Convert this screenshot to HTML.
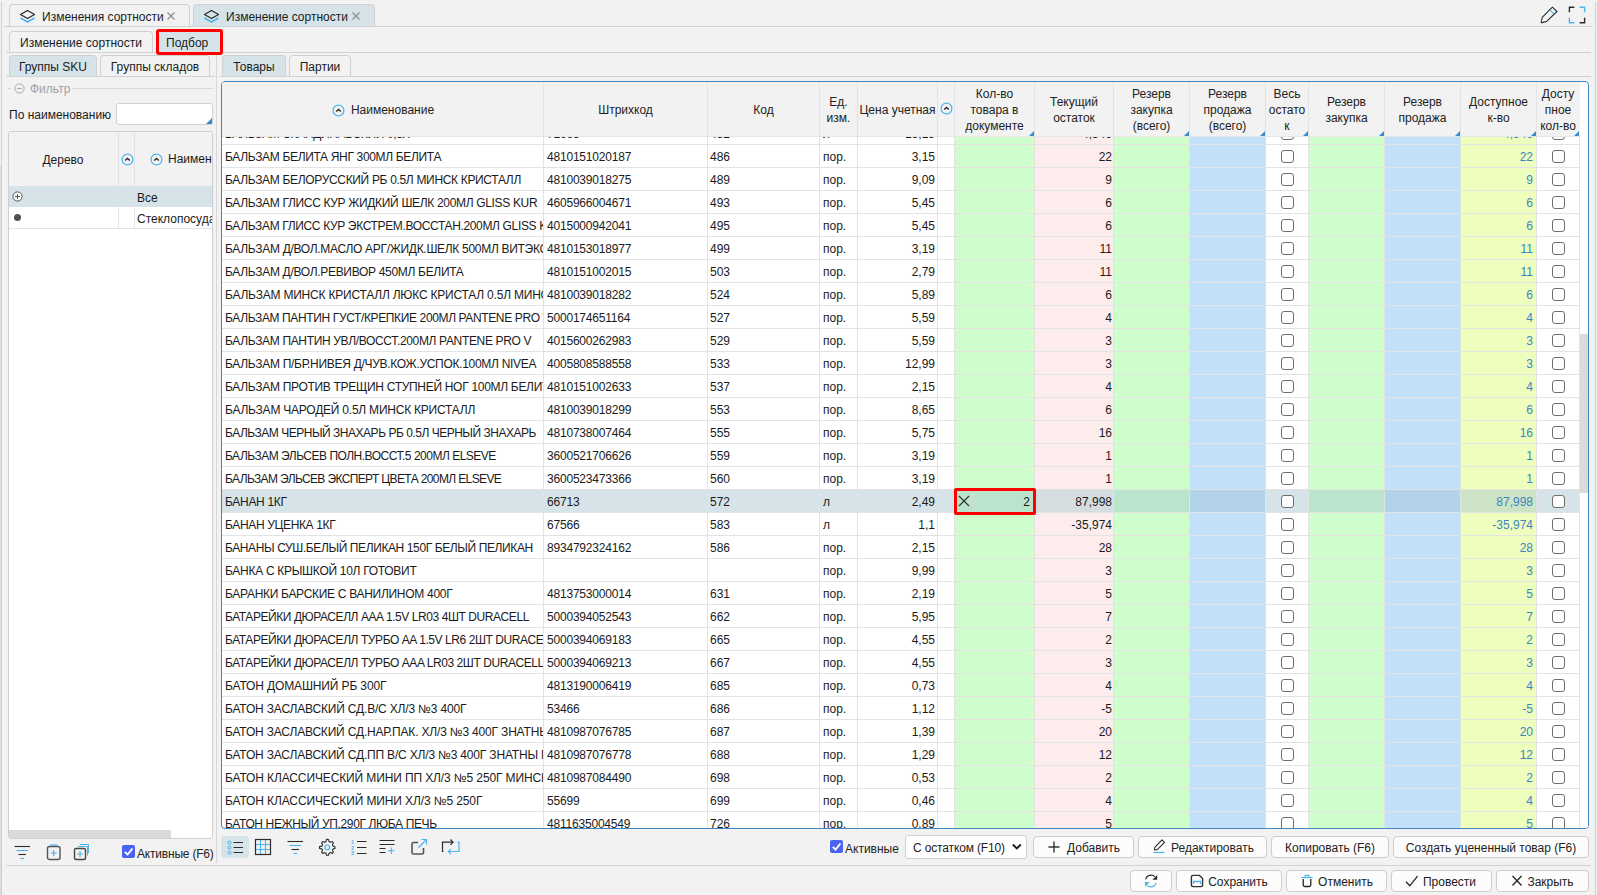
<!DOCTYPE html>
<html><head><meta charset="utf-8">
<style>
*{box-sizing:border-box}
html,body{margin:0;padding:0}
body{width:1597px;height:895px;overflow:hidden;background:#f2f2f2;position:relative;
font-family:"Liberation Sans",sans-serif;font-size:12px;color:#1b1b1b}
.a{position:absolute}
svg.a{overflow:visible}
.tab{position:absolute;height:23px;border:1px solid #d0d0d0;border-bottom:none;border-radius:4px 4px 0 0;background:#f2f2f2;
 line-height:22px;text-align:center;white-space:nowrap}
.tab.on{background:#d6e4e9}
.line{position:absolute;height:1px;background:#d3d3d3}
.grid{position:absolute;left:221px;top:81px;width:1368px;height:748px;border:1px solid #3f86c0;border-radius:4px;background:#fff;overflow:hidden}
.gin{position:absolute;left:-222px;top:-82px;width:1597px;height:895px}
.colbg{position:absolute;top:136px;height:700px}
.rbg{position:absolute;height:22px}
.c{position:absolute;height:23px;line-height:26px;white-space:nowrap;overflow:hidden}
.c.nm{letter-spacing:-0.35px}
.c.r{text-align:right}
.c.bl{color:#3b84c4}
.hl{position:absolute;left:222px;width:1358px;height:1px;background:#e3e3e3}
.vl{position:absolute;top:136px;height:700px;width:1px;background:#e3e3e3}
.cb{position:absolute;width:13px;height:13px;border:1.3px solid #6e6e6e;border-radius:3px;background:#fff}
.hdr{position:absolute;left:222px;top:82px;width:1358px;height:55px;background:#f2f2f2;border-bottom:1px solid #e6e6e6}
.hc{position:absolute;top:83px;height:54px;padding-left:1px;display:flex;align-items:center;justify-content:center;text-align:center;line-height:16px;color:#222}
.hvl{position:absolute;top:82px;height:55px;width:1px;background:#e3e3e3}
.tri{position:absolute;top:131px;width:0;height:0;border-left:5px solid transparent;border-bottom:5px solid #3a8ad0}
.sort{display:inline-block;width:12px;height:12px;border:1.3px solid #4db3ee;border-radius:50%;margin-right:6px;position:relative;vertical-align:-1px}
.sort:after{content:"";position:absolute;left:2.8px;top:3.3px;width:3px;height:3px;border-left:1.3px solid #333;border-top:1.3px solid #333;transform:rotate(45deg)}
.sb{position:absolute;left:1580px;top:137px;width:8px;height:693px;background:#fff}
.sbt{position:absolute;left:1580px;top:334px;width:8px;height:159px;background:#dadada}
.btn{position:absolute;height:22px;border:1px solid #cdcdcd;border-radius:4px;background:#fcfcfc;line-height:22px;text-align:center;white-space:nowrap;color:#222}
</style></head><body>
<div class="a" style="left:1px;top:2px;width:1px;height:893px;background:#d0d0d0"></div>
<div class="a" style="left:0;top:166px;width:1px;height:729px;background:#dcdcdc"></div>
<div class="a" style="left:1595px;top:2px;width:1px;height:893px;background:#d0d0d0"></div>

<!-- tab row 1 -->
<div class="line" style="left:4px;top:26px;width:1589px"></div>
<div class="tab" style="left:9px;top:4px;width:181px;height:22px;text-align:left;padding-left:32px;line-height:24px">Изменения сортности</div>
<div class="tab on" style="left:193px;top:4px;width:182px;height:22px;text-align:left;padding-left:32px;line-height:24px">Изменение сортности</div>
<svg class="a" style="left:19px;top:9px" width="17" height="15" viewBox="0 0 17 15" fill="none"><path d="M1.5 5.5 L8.5 1.5 L15.5 5.5 L8.5 9.5 Z" stroke="#2b2b2b" stroke-width="1.3" stroke-linejoin="round"/><path d="M1.5 9 L8.5 13 L15.5 9" stroke="#4db3ee" stroke-width="1.5" stroke-linejoin="round"/></svg><svg class="a" style="left:203px;top:9px" width="17" height="15" viewBox="0 0 17 15" fill="none"><path d="M1.5 5.5 L8.5 1.5 L15.5 5.5 L8.5 9.5 Z" stroke="#2b2b2b" stroke-width="1.3" stroke-linejoin="round"/><path d="M1.5 9 L8.5 13 L15.5 9" stroke="#4db3ee" stroke-width="1.5" stroke-linejoin="round"/></svg><svg class="a" style="left:167px;top:12px" width="8" height="8" viewBox="0 0 8 8"><path d="M0.5 0.5 L7.5 7.5 M7.5 0.5 L0.5 7.5" stroke="#8a8a8a" stroke-width="1.1"/></svg><svg class="a" style="left:352px;top:12px" width="8" height="8" viewBox="0 0 8 8"><path d="M0.5 0.5 L7.5 7.5 M7.5 0.5 L0.5 7.5" stroke="#8a8a8a" stroke-width="1.1"/></svg>
<svg class="a" style="left:1539px;top:5px" width="20" height="20" viewBox="0 0 20 20" fill="none"><path d="M2.2 17.7 Q2.6 14.5 3.4 12.2 L13.4 2.2 L17.9 6.5 L7.5 16.6 Q5 17.3 2.2 17.7 Z" stroke="#2b2b2b" stroke-width="1.05" stroke-linejoin="round"/><path d="M11 5.1 L15.1 8.9" stroke="#4db3ee" stroke-width="1.05"/></svg><svg class="a" style="left:1567px;top:5px" width="20" height="20" viewBox="0 0 20 20" fill="none"><path d="M2.4 6.8 V2.3 H6.9" stroke="#2b2b2b" stroke-width="1.4" stroke-linecap="round"/><path d="M13.1 2.3 H17.6 V6.8" stroke="#4db3ee" stroke-width="1.4" stroke-linecap="round"/><path d="M2.4 13.2 V17.7 H6.9" stroke="#4db3ee" stroke-width="1.4" stroke-linecap="round"/><path d="M13.1 17.7 H17.6 V13.2" stroke="#2b2b2b" stroke-width="1.4" stroke-linecap="round"/></svg>

<!-- tab row 2 -->
<div class="line" style="left:6px;top:52px;width:1585px"></div>
<div class="tab" style="left:9px;top:31px;width:144px;height:21px">Изменение сортности</div>
<div class="tab on" style="left:159px;top:31px;width:61px;height:21px;text-align:left;padding-left:6px;border-color:#d6e4e9">Подбор</div>
<div class="a" style="left:156px;top:29px;width:67px;height:26px;border:3px solid #f00;border-radius:3px"></div>

<!-- tab row 3 -->
<div class="line" style="left:6px;top:76px;width:209px"></div>
<div class="line" style="left:219px;top:76px;width:1372px"></div>
<div class="a" style="left:216px;top:55px;width:1px;height:808px;background:#d8d8d8"></div>
<div class="tab on" style="left:9px;top:55px;width:88px;height:21px">Группы SKU</div>
<div class="tab" style="left:100px;top:55px;width:110px;height:21px">Группы складов</div>
<div class="tab on" style="left:222px;top:55px;width:64px;height:21px">Товары</div>
<div class="tab" style="left:289px;top:55px;width:62px;height:21px">Партии</div>


<!-- filter fieldset -->
<div class="line" style="left:8px;top:88px;width:3px;background:#d4d4d4"></div>
<svg class="a" style="left:14px;top:83px" width="11" height="11" viewBox="0 0 11 11" fill="none"><circle cx="5.5" cy="5.5" r="4.6" stroke="#aaa" stroke-width="1"/><path d="M3 5.5 H8" stroke="#aaa" stroke-width="1"/></svg>
<div class="a" style="left:30px;top:81px;line-height:16px;color:#a3a3a3">Фильтр</div>
<div class="line" style="left:72px;top:88px;width:141px;background:#d8d8d8"></div>
<div class="a" style="left:9px;top:107px;line-height:16px;color:#1b1b1b">По наименованию</div>
<div class="a" style="left:116px;top:103px;width:97px;height:22px;background:#fff;border:1px solid #d2d2d2;border-radius:3px"></div>
<div class="a" style="left:206px;top:118px;width:0;height:0;border-left:6px solid transparent;border-bottom:6px solid #3a8ad0"></div>
<!-- tree grid -->
<div class="a" style="left:8px;top:131px;width:205px;height:708px;background:#fff;border:1px solid #cfcfcf;border-radius:3px;overflow:hidden">
  <div class="a" style="left:0;top:0;width:205px;height:55px;background:#f2f2f2"></div>
  <div class="a" style="left:109px;top:0;width:1px;height:96px;background:#e3e3e3"></div>
  <div class="a" style="left:125px;top:0;width:1px;height:96px;background:#e3e3e3"></div>
  <div class="a" style="left:0;top:54px;width:205px;height:21px;background:#d6e4e9"></div>
  <div class="a" style="left:0;top:96px;width:205px;height:1px;background:#e3e3e3"></div>
  <div class="a" style="left:-1px;top:698px;width:163px;height:8px;background:#dadada"></div>
</div>
<div class="a" style="left:8px;top:152px;width:110px;text-align:center;line-height:16px">Дерево</div>
<svg class="a" style="left:120.5px;top:152.5px" width="13" height="13" viewBox="0 0 13 13" fill="none"><circle cx="6.5" cy="6.5" r="5.4" stroke="#4db3ee" stroke-width="1.25"/><path d="M4.2 7.6 L6.5 5.4 L8.8 7.6" stroke="#2b2b2b" stroke-width="1.4"/></svg>
<svg class="a" style="left:149.5px;top:152.5px" width="13" height="13" viewBox="0 0 13 13" fill="none"><circle cx="6.5" cy="6.5" r="5.4" stroke="#4db3ee" stroke-width="1.25"/><path d="M4.2 7.6 L6.5 5.4 L8.8 7.6" stroke="#2b2b2b" stroke-width="1.4"/></svg>
<div class="a" style="left:168px;top:151px;width:44px;overflow:hidden;white-space:nowrap;line-height:16px">Наименование</div>
<svg class="a" style="left:12px;top:191px" width="11" height="11" viewBox="0 0 11 11" fill="none"><circle cx="5.5" cy="5.5" r="4.6" stroke="#555" stroke-width="1" fill="#fafafa"/><path d="M3 5.5 H8 M5.5 3 V8" stroke="#555" stroke-width="1"/></svg>
<div class="a" style="left:14px;top:214px;width:7px;height:7px;border-radius:50%;background:#505050"></div>
<div class="a" style="left:137px;top:190px;line-height:16px">Все</div>
<div class="a" style="left:137px;top:211px;width:75px;overflow:hidden;white-space:nowrap;line-height:16px">Стеклопосуда</div>
<!-- left bottom toolbar -->
<svg class="a" style="left:14px;top:845px" width="17" height="14" viewBox="0 0 17 14" fill="none"><path d="M0.5 1.5 H16" stroke="#2b2b2b" stroke-width="1.1"/><path d="M2.5 5.5 H14" stroke="#4db3ee" stroke-width="1.1"/><path d="M4.5 9.5 H12" stroke="#2b2b2b" stroke-width="1.1"/><path d="M6.5 13.5 H10" stroke="#4db3ee" stroke-width="1.1"/></svg>
<svg class="a" style="left:46px;top:844px" width="16" height="17" viewBox="0 0 16 17" fill="none"><rect x="1.5" y="2.5" width="12.5" height="13" rx="2" stroke="#555" stroke-width="1.4"/><path d="M4 1 H11.5" stroke="#4db3ee" stroke-width="1.2"/><path d="M7.75 6 V12 M4.75 9 H10.75" stroke="#4db3ee" stroke-width="1.2"/></svg>
<svg class="a" style="left:73px;top:843px" width="16" height="18" viewBox="0 0 16 18" fill="none"><rect x="1.5" y="5.5" width="11" height="11" rx="1.5" stroke="#444" stroke-width="1.4"/><path d="M5 3.5 H14.5 V12.5" stroke="#4db3ee" stroke-width="1"/><path d="M7 1.5 H15.5 V10" stroke="#4db3ee" stroke-width="1"/><path d="M7 8 V14 M4 11 H10" stroke="#4db3ee" stroke-width="1.2"/></svg>
<svg class="a" style="left:122px;top:845px" width="13" height="13" viewBox="0 0 13 13" fill="none"><rect x="0" y="0" width="13" height="13" rx="2" fill="#4a63f2"/><path d="M2.8 6.8 L5.5 9.5 L10.5 3.5" stroke="#fff" stroke-width="1.9" fill="none"/></svg>
<div class="a" style="left:137px;top:846px;line-height:16px;color:#222;white-space:nowrap;letter-spacing:-0.2px">Активные (F6)</div>


<!-- main grid -->
<div class="grid"><div class="gin">
<div class="colbg" style="left:954px;width:80px;background:#cdfecb"></div><div class="colbg" style="left:1034px;width:79px;background:#fdecec"></div><div class="colbg" style="left:1113px;width:76px;background:#cdfecb"></div><div class="colbg" style="left:1189px;width:76px;background:#c3e0fb"></div><div class="colbg" style="left:1308px;width:76px;background:#cdfecb"></div><div class="colbg" style="left:1384px;width:76px;background:#c3e0fb"></div><div class="colbg" style="left:1460px;width:76px;background:#eefebc"></div><div class="c nm" style="top:121px;left:225px;width:318px;letter-spacing:-0.35px">БАЛЬЗАМ СКАНДИНАВСКИЙ 0,5Л</div><div class="c" style="top:121px;left:547px;width:160px;letter-spacing:-0.2px">71663</div><div class="c" style="top:121px;left:710px;width:108px">482</div><div class="c" style="top:121px;left:823px;width:34px">л</div><div class="c r" style="top:121px;left:857px;width:78px">15,15</div><div class="c r" style="top:121px;left:1034px;width:78px">4,346</div><div class="c r bl" style="top:121px;left:1460px;width:73px">4,346</div><div class="cb" style="left:1281px;top:127px"></div><div class="cb" style="left:1552px;top:127px"></div><div class="c nm" style="top:144px;left:225px;width:318px;letter-spacing:-0.333px">БАЛЬЗАМ БЕЛИТА ЯНГ 300МЛ БЕЛИТА</div><div class="c" style="top:144px;left:547px;width:160px;letter-spacing:-0.2px">4810151020187</div><div class="c" style="top:144px;left:710px;width:108px">486</div><div class="c" style="top:144px;left:823px;width:34px">пор.</div><div class="c r" style="top:144px;left:857px;width:78px">3,15</div><div class="c r" style="top:144px;left:1034px;width:78px">22</div><div class="c r bl" style="top:144px;left:1460px;width:73px">22</div><div class="cb" style="left:1281px;top:150px"></div><div class="cb" style="left:1552px;top:150px"></div><div class="c nm" style="top:167px;left:225px;width:318px;letter-spacing:-0.326px">БАЛЬЗАМ БЕЛОРУССКИЙ РБ 0.5Л МИНСК КРИСТАЛЛ</div><div class="c" style="top:167px;left:547px;width:160px;letter-spacing:-0.2px">4810039018275</div><div class="c" style="top:167px;left:710px;width:108px">489</div><div class="c" style="top:167px;left:823px;width:34px">пор.</div><div class="c r" style="top:167px;left:857px;width:78px">9,09</div><div class="c r" style="top:167px;left:1034px;width:78px">9</div><div class="c r bl" style="top:167px;left:1460px;width:73px">9</div><div class="cb" style="left:1281px;top:173px"></div><div class="cb" style="left:1552px;top:173px"></div><div class="c nm" style="top:190px;left:225px;width:318px;letter-spacing:-0.327px">БАЛЬЗАМ ГЛИСС КУР ЖИДКИЙ ШЕЛК 200МЛ GLISS KUR</div><div class="c" style="top:190px;left:547px;width:160px;letter-spacing:-0.2px">4605966004671</div><div class="c" style="top:190px;left:710px;width:108px">493</div><div class="c" style="top:190px;left:823px;width:34px">пор.</div><div class="c r" style="top:190px;left:857px;width:78px">5,45</div><div class="c r" style="top:190px;left:1034px;width:78px">6</div><div class="c r bl" style="top:190px;left:1460px;width:73px">6</div><div class="cb" style="left:1281px;top:196px"></div><div class="cb" style="left:1552px;top:196px"></div><div class="c nm" style="top:213px;left:225px;width:318px;letter-spacing:-0.35px">БАЛЬЗАМ ГЛИСС КУР ЭКСТРЕМ.ВОССТАН.200МЛ GLISS KUR</div><div class="c" style="top:213px;left:547px;width:160px;letter-spacing:-0.2px">4015000942041</div><div class="c" style="top:213px;left:710px;width:108px">495</div><div class="c" style="top:213px;left:823px;width:34px">пор.</div><div class="c r" style="top:213px;left:857px;width:78px">5,45</div><div class="c r" style="top:213px;left:1034px;width:78px">6</div><div class="c r bl" style="top:213px;left:1460px;width:73px">6</div><div class="cb" style="left:1281px;top:219px"></div><div class="cb" style="left:1552px;top:219px"></div><div class="c nm" style="top:236px;left:225px;width:318px;letter-spacing:-0.3px">БАЛЬЗАМ Д/ВОЛ.МАСЛО АРГ/ЖИДК.ШЕЛК 500МЛ ВИТЭКС</div><div class="c" style="top:236px;left:547px;width:160px;letter-spacing:-0.2px">4810153018977</div><div class="c" style="top:236px;left:710px;width:108px">499</div><div class="c" style="top:236px;left:823px;width:34px">пор.</div><div class="c r" style="top:236px;left:857px;width:78px">3,19</div><div class="c r" style="top:236px;left:1034px;width:78px">11</div><div class="c r bl" style="top:236px;left:1460px;width:73px">11</div><div class="cb" style="left:1281px;top:242px"></div><div class="cb" style="left:1552px;top:242px"></div><div class="c nm" style="top:259px;left:225px;width:318px;letter-spacing:-0.308px">БАЛЬЗАМ Д/ВОЛ.РЕВИВОР 450МЛ БЕЛИТА</div><div class="c" style="top:259px;left:547px;width:160px;letter-spacing:-0.2px">4810151002015</div><div class="c" style="top:259px;left:710px;width:108px">503</div><div class="c" style="top:259px;left:823px;width:34px">пор.</div><div class="c r" style="top:259px;left:857px;width:78px">2,79</div><div class="c r" style="top:259px;left:1034px;width:78px">11</div><div class="c r bl" style="top:259px;left:1460px;width:73px">11</div><div class="cb" style="left:1281px;top:265px"></div><div class="cb" style="left:1552px;top:265px"></div><div class="c nm" style="top:282px;left:225px;width:318px;letter-spacing:-0.21px">БАЛЬЗАМ МИНСК КРИСТАЛЛ ЛЮКС КРИСТАЛ 0.5Л МИНСК КРИСТАЛЛ</div><div class="c" style="top:282px;left:547px;width:160px;letter-spacing:-0.2px">4810039018282</div><div class="c" style="top:282px;left:710px;width:108px">524</div><div class="c" style="top:282px;left:823px;width:34px">пор.</div><div class="c r" style="top:282px;left:857px;width:78px">5,89</div><div class="c r" style="top:282px;left:1034px;width:78px">6</div><div class="c r bl" style="top:282px;left:1460px;width:73px">6</div><div class="cb" style="left:1281px;top:288px"></div><div class="cb" style="left:1552px;top:288px"></div><div class="c nm" style="top:305px;left:225px;width:318px;letter-spacing:-0.37px">БАЛЬЗАМ ПАНТИН ГУСТ/КРЕПКИЕ 200МЛ PANTENE PRO V</div><div class="c" style="top:305px;left:547px;width:160px;letter-spacing:-0.2px">5000174651164</div><div class="c" style="top:305px;left:710px;width:108px">527</div><div class="c" style="top:305px;left:823px;width:34px">пор.</div><div class="c r" style="top:305px;left:857px;width:78px">5,59</div><div class="c r" style="top:305px;left:1034px;width:78px">4</div><div class="c r bl" style="top:305px;left:1460px;width:73px">4</div><div class="cb" style="left:1281px;top:311px"></div><div class="cb" style="left:1552px;top:311px"></div><div class="c nm" style="top:328px;left:225px;width:318px;letter-spacing:-0.334px">БАЛЬЗАМ ПАНТИН УВЛ/ВОССТ.200МЛ PANTENE PRO V</div><div class="c" style="top:328px;left:547px;width:160px;letter-spacing:-0.2px">4015600262983</div><div class="c" style="top:328px;left:710px;width:108px">529</div><div class="c" style="top:328px;left:823px;width:34px">пор.</div><div class="c r" style="top:328px;left:857px;width:78px">5,59</div><div class="c r" style="top:328px;left:1034px;width:78px">3</div><div class="c r bl" style="top:328px;left:1460px;width:73px">3</div><div class="cb" style="left:1281px;top:334px"></div><div class="cb" style="left:1552px;top:334px"></div><div class="c nm" style="top:351px;left:225px;width:318px;letter-spacing:-0.297px">БАЛЬЗАМ П/БР.НИВЕЯ Д/ЧУВ.КОЖ.УСПОК.100МЛ NIVEA</div><div class="c" style="top:351px;left:547px;width:160px;letter-spacing:-0.2px">4005808588558</div><div class="c" style="top:351px;left:710px;width:108px">533</div><div class="c" style="top:351px;left:823px;width:34px">пор.</div><div class="c r" style="top:351px;left:857px;width:78px">12,99</div><div class="c r" style="top:351px;left:1034px;width:78px">3</div><div class="c r bl" style="top:351px;left:1460px;width:73px">3</div><div class="cb" style="left:1281px;top:357px"></div><div class="cb" style="left:1552px;top:357px"></div><div class="c nm" style="top:374px;left:225px;width:318px;letter-spacing:-0.3px">БАЛЬЗАМ ПРОТИВ ТРЕЩИН СТУПНЕЙ НОГ 100МЛ БЕЛИТА</div><div class="c" style="top:374px;left:547px;width:160px;letter-spacing:-0.2px">4810151002633</div><div class="c" style="top:374px;left:710px;width:108px">537</div><div class="c" style="top:374px;left:823px;width:34px">пор.</div><div class="c r" style="top:374px;left:857px;width:78px">2,15</div><div class="c r" style="top:374px;left:1034px;width:78px">4</div><div class="c r bl" style="top:374px;left:1460px;width:73px">4</div><div class="cb" style="left:1281px;top:380px"></div><div class="cb" style="left:1552px;top:380px"></div><div class="c nm" style="top:397px;left:225px;width:318px;letter-spacing:-0.226px">БАЛЬЗАМ ЧАРОДЕЙ 0.5Л МИНСК КРИСТАЛЛ</div><div class="c" style="top:397px;left:547px;width:160px;letter-spacing:-0.2px">4810039018299</div><div class="c" style="top:397px;left:710px;width:108px">553</div><div class="c" style="top:397px;left:823px;width:34px">пор.</div><div class="c r" style="top:397px;left:857px;width:78px">8,65</div><div class="c r" style="top:397px;left:1034px;width:78px">6</div><div class="c r bl" style="top:397px;left:1460px;width:73px">6</div><div class="cb" style="left:1281px;top:403px"></div><div class="cb" style="left:1552px;top:403px"></div><div class="c nm" style="top:420px;left:225px;width:318px;letter-spacing:-0.482px">БАЛЬЗАМ ЧЕРНЫЙ ЗНАХАРЬ РБ 0.5Л ЧЕРНЫЙ ЗНАХАРЬ</div><div class="c" style="top:420px;left:547px;width:160px;letter-spacing:-0.2px">4810738007464</div><div class="c" style="top:420px;left:710px;width:108px">555</div><div class="c" style="top:420px;left:823px;width:34px">пор.</div><div class="c r" style="top:420px;left:857px;width:78px">5,75</div><div class="c r" style="top:420px;left:1034px;width:78px">16</div><div class="c r bl" style="top:420px;left:1460px;width:73px">16</div><div class="cb" style="left:1281px;top:426px"></div><div class="cb" style="left:1552px;top:426px"></div><div class="c nm" style="top:443px;left:225px;width:318px;letter-spacing:-0.494px">БАЛЬЗАМ ЭЛЬСЕВ ПОЛН.ВОССТ.5 200МЛ ELSEVE</div><div class="c" style="top:443px;left:547px;width:160px;letter-spacing:-0.2px">3600521706626</div><div class="c" style="top:443px;left:710px;width:108px">559</div><div class="c" style="top:443px;left:823px;width:34px">пор.</div><div class="c r" style="top:443px;left:857px;width:78px">3,19</div><div class="c r" style="top:443px;left:1034px;width:78px">1</div><div class="c r bl" style="top:443px;left:1460px;width:73px">1</div><div class="cb" style="left:1281px;top:449px"></div><div class="cb" style="left:1552px;top:449px"></div><div class="c nm" style="top:466px;left:225px;width:318px;letter-spacing:-0.625px">БАЛЬЗАМ ЭЛЬСЕВ ЭКСПЕРТ ЦВЕТА 200МЛ ELSEVE</div><div class="c" style="top:466px;left:547px;width:160px;letter-spacing:-0.2px">3600523473366</div><div class="c" style="top:466px;left:710px;width:108px">560</div><div class="c" style="top:466px;left:823px;width:34px">пор.</div><div class="c r" style="top:466px;left:857px;width:78px">3,19</div><div class="c r" style="top:466px;left:1034px;width:78px">1</div><div class="c r bl" style="top:466px;left:1460px;width:73px">1</div><div class="cb" style="left:1281px;top:472px"></div><div class="cb" style="left:1552px;top:472px"></div><div class="rbg" style="top:490px;left:222px;width:732px;background:#d6e4e9"></div><div class="rbg" style="top:490px;left:954px;width:80px;background:#bae4cc"></div><div class="rbg" style="top:490px;left:1034px;width:79px;background:#d6dde1"></div><div class="rbg" style="top:490px;left:1113px;width:76px;background:#bae4cc"></div><div class="rbg" style="top:490px;left:1189px;width:76px;background:#b3d3e8"></div><div class="rbg" style="top:490px;left:1308px;width:76px;background:#bae4cc"></div><div class="rbg" style="top:490px;left:1384px;width:76px;background:#b3d3e8"></div><div class="rbg" style="top:490px;left:1460px;width:76px;background:#cde3c6"></div><div class="rbg" style="top:490px;left:1265px;width:43px;background:#d6e4e9"></div><div class="rbg" style="top:490px;left:1536px;width:43px;background:#d6e4e9"></div><div class="c nm" style="top:489px;left:225px;width:318px;letter-spacing:-0.3px">БАНАН 1КГ</div><div class="c" style="top:489px;left:547px;width:160px;letter-spacing:-0.2px">66713</div><div class="c" style="top:489px;left:710px;width:108px">572</div><div class="c" style="top:489px;left:823px;width:34px">л</div><div class="c r" style="top:489px;left:857px;width:78px">2,49</div><div class="c r" style="top:489px;left:1034px;width:78px">87,998</div><div class="c r bl" style="top:489px;left:1460px;width:73px">87,998</div><div class="cb" style="left:1281px;top:495px"></div><div class="cb" style="left:1552px;top:495px"></div><div class="c nm" style="top:512px;left:225px;width:318px;letter-spacing:-0.35px">БАНАН УЦЕНКА 1КГ</div><div class="c" style="top:512px;left:547px;width:160px;letter-spacing:-0.2px">67566</div><div class="c" style="top:512px;left:710px;width:108px">583</div><div class="c" style="top:512px;left:823px;width:34px">л</div><div class="c r" style="top:512px;left:857px;width:78px">1,1</div><div class="c r" style="top:512px;left:1034px;width:78px">-35,974</div><div class="c r bl" style="top:512px;left:1460px;width:73px">-35,974</div><div class="cb" style="left:1281px;top:518px"></div><div class="cb" style="left:1552px;top:518px"></div><div class="c nm" style="top:535px;left:225px;width:318px;letter-spacing:-0.39px">БАНАНЫ СУШ.БЕЛЫЙ ПЕЛИКАН 150Г БЕЛЫЙ ПЕЛИКАН</div><div class="c" style="top:535px;left:547px;width:160px;letter-spacing:-0.2px">8934792324162</div><div class="c" style="top:535px;left:710px;width:108px">586</div><div class="c" style="top:535px;left:823px;width:34px">пор.</div><div class="c r" style="top:535px;left:857px;width:78px">2,15</div><div class="c r" style="top:535px;left:1034px;width:78px">28</div><div class="c r bl" style="top:535px;left:1460px;width:73px">28</div><div class="cb" style="left:1281px;top:541px"></div><div class="cb" style="left:1552px;top:541px"></div><div class="c nm" style="top:558px;left:225px;width:318px;letter-spacing:-0.285px">БАНКА С КРЫШКОЙ 10Л ГОТОВИТ</div><div class="c" style="top:558px;left:547px;width:160px;letter-spacing:-0.2px"></div><div class="c" style="top:558px;left:710px;width:108px"></div><div class="c" style="top:558px;left:823px;width:34px">пор.</div><div class="c r" style="top:558px;left:857px;width:78px">9,99</div><div class="c r" style="top:558px;left:1034px;width:78px">3</div><div class="c r bl" style="top:558px;left:1460px;width:73px">3</div><div class="cb" style="left:1281px;top:564px"></div><div class="cb" style="left:1552px;top:564px"></div><div class="c nm" style="top:581px;left:225px;width:318px;letter-spacing:-0.295px">БАРАНКИ БАРСКИЕ С ВАНИЛИНОМ 400Г</div><div class="c" style="top:581px;left:547px;width:160px;letter-spacing:-0.2px">4813753000014</div><div class="c" style="top:581px;left:710px;width:108px">631</div><div class="c" style="top:581px;left:823px;width:34px">пор.</div><div class="c r" style="top:581px;left:857px;width:78px">2,19</div><div class="c r" style="top:581px;left:1034px;width:78px">5</div><div class="c r bl" style="top:581px;left:1460px;width:73px">5</div><div class="cb" style="left:1281px;top:587px"></div><div class="cb" style="left:1552px;top:587px"></div><div class="c nm" style="top:604px;left:225px;width:318px;letter-spacing:-0.43px">БАТАРЕЙКИ ДЮРАСЕЛЛ AAA 1.5V LR03 4ШТ DURACELL</div><div class="c" style="top:604px;left:547px;width:160px;letter-spacing:-0.2px">5000394052543</div><div class="c" style="top:604px;left:710px;width:108px">662</div><div class="c" style="top:604px;left:823px;width:34px">пор.</div><div class="c r" style="top:604px;left:857px;width:78px">5,95</div><div class="c r" style="top:604px;left:1034px;width:78px">7</div><div class="c r bl" style="top:604px;left:1460px;width:73px">7</div><div class="cb" style="left:1281px;top:610px"></div><div class="cb" style="left:1552px;top:610px"></div><div class="c nm" style="top:627px;left:225px;width:318px;letter-spacing:-0.43px">БАТАРЕЙКИ ДЮРАСЕЛЛ ТУРБО AA 1.5V LR6 2ШТ DURACELL</div><div class="c" style="top:627px;left:547px;width:160px;letter-spacing:-0.2px">5000394069183</div><div class="c" style="top:627px;left:710px;width:108px">665</div><div class="c" style="top:627px;left:823px;width:34px">пор.</div><div class="c r" style="top:627px;left:857px;width:78px">4,55</div><div class="c r" style="top:627px;left:1034px;width:78px">2</div><div class="c r bl" style="top:627px;left:1460px;width:73px">2</div><div class="cb" style="left:1281px;top:633px"></div><div class="cb" style="left:1552px;top:633px"></div><div class="c nm" style="top:650px;left:225px;width:318px;letter-spacing:-0.43px">БАТАРЕЙКИ ДЮРАСЕЛЛ ТУРБО AAA LR03 2ШТ DURACELL</div><div class="c" style="top:650px;left:547px;width:160px;letter-spacing:-0.2px">5000394069213</div><div class="c" style="top:650px;left:710px;width:108px">667</div><div class="c" style="top:650px;left:823px;width:34px">пор.</div><div class="c r" style="top:650px;left:857px;width:78px">4,55</div><div class="c r" style="top:650px;left:1034px;width:78px">3</div><div class="c r bl" style="top:650px;left:1460px;width:73px">3</div><div class="cb" style="left:1281px;top:656px"></div><div class="cb" style="left:1552px;top:656px"></div><div class="c nm" style="top:673px;left:225px;width:318px;letter-spacing:-0.131px">БАТОН ДОМАШНИЙ РБ 300Г</div><div class="c" style="top:673px;left:547px;width:160px;letter-spacing:-0.2px">4813190006419</div><div class="c" style="top:673px;left:710px;width:108px">685</div><div class="c" style="top:673px;left:823px;width:34px">пор.</div><div class="c r" style="top:673px;left:857px;width:78px">0,73</div><div class="c r" style="top:673px;left:1034px;width:78px">4</div><div class="c r bl" style="top:673px;left:1460px;width:73px">4</div><div class="cb" style="left:1281px;top:679px"></div><div class="cb" style="left:1552px;top:679px"></div><div class="c nm" style="top:696px;left:225px;width:318px;letter-spacing:-0.176px">БАТОН ЗАСЛАВСКИЙ СД.В/С ХЛ/3 №3 400Г</div><div class="c" style="top:696px;left:547px;width:160px;letter-spacing:-0.2px">53466</div><div class="c" style="top:696px;left:710px;width:108px">686</div><div class="c" style="top:696px;left:823px;width:34px">пор.</div><div class="c r" style="top:696px;left:857px;width:78px">1,12</div><div class="c r" style="top:696px;left:1034px;width:78px">-5</div><div class="c r bl" style="top:696px;left:1460px;width:73px">-5</div><div class="cb" style="left:1281px;top:702px"></div><div class="cb" style="left:1552px;top:702px"></div><div class="c nm" style="top:719px;left:225px;width:318px;letter-spacing:-0.18px">БАТОН ЗАСЛАВСКИЙ СД.НАР.ПАК. ХЛ/3 №3 400Г ЗНАТНЫЙ</div><div class="c" style="top:719px;left:547px;width:160px;letter-spacing:-0.2px">4810987076785</div><div class="c" style="top:719px;left:710px;width:108px">687</div><div class="c" style="top:719px;left:823px;width:34px">пор.</div><div class="c r" style="top:719px;left:857px;width:78px">1,39</div><div class="c r" style="top:719px;left:1034px;width:78px">20</div><div class="c r bl" style="top:719px;left:1460px;width:73px">20</div><div class="cb" style="left:1281px;top:725px"></div><div class="cb" style="left:1552px;top:725px"></div><div class="c nm" style="top:742px;left:225px;width:318px;letter-spacing:-0.18px">БАТОН ЗАСЛАВСКИЙ СД.ПП В/С ХЛ/3 №3 400Г ЗНАТНЫ ПЕЧЬ</div><div class="c" style="top:742px;left:547px;width:160px;letter-spacing:-0.2px">4810987076778</div><div class="c" style="top:742px;left:710px;width:108px">688</div><div class="c" style="top:742px;left:823px;width:34px">пор.</div><div class="c r" style="top:742px;left:857px;width:78px">1,29</div><div class="c r" style="top:742px;left:1034px;width:78px">12</div><div class="c r bl" style="top:742px;left:1460px;width:73px">12</div><div class="cb" style="left:1281px;top:748px"></div><div class="cb" style="left:1552px;top:748px"></div><div class="c nm" style="top:765px;left:225px;width:318px;letter-spacing:-0.12px">БАТОН КЛАССИЧЕСКИЙ МИНИ ПП ХЛ/3 №5 250Г МИНСКХЛЕБПРОМ</div><div class="c" style="top:765px;left:547px;width:160px;letter-spacing:-0.2px">4810987084490</div><div class="c" style="top:765px;left:710px;width:108px">698</div><div class="c" style="top:765px;left:823px;width:34px">пор.</div><div class="c r" style="top:765px;left:857px;width:78px">0,53</div><div class="c r" style="top:765px;left:1034px;width:78px">2</div><div class="c r bl" style="top:765px;left:1460px;width:73px">2</div><div class="cb" style="left:1281px;top:771px"></div><div class="cb" style="left:1552px;top:771px"></div><div class="c nm" style="top:788px;left:225px;width:318px;letter-spacing:-0.116px">БАТОН КЛАССИЧЕСКИЙ МИНИ ХЛ/3 №5 250Г</div><div class="c" style="top:788px;left:547px;width:160px;letter-spacing:-0.2px">55699</div><div class="c" style="top:788px;left:710px;width:108px">699</div><div class="c" style="top:788px;left:823px;width:34px">пор.</div><div class="c r" style="top:788px;left:857px;width:78px">0,46</div><div class="c r" style="top:788px;left:1034px;width:78px">4</div><div class="c r bl" style="top:788px;left:1460px;width:73px">4</div><div class="cb" style="left:1281px;top:794px"></div><div class="cb" style="left:1552px;top:794px"></div><div class="c nm" style="top:811px;left:225px;width:318px;letter-spacing:-0.364px">БАТОН НЕЖНЫЙ УП.290Г ЛЮБА ПЕЧЬ</div><div class="c" style="top:811px;left:547px;width:160px;letter-spacing:-0.2px">4811635004549</div><div class="c" style="top:811px;left:710px;width:108px">726</div><div class="c" style="top:811px;left:823px;width:34px">пор.</div><div class="c r" style="top:811px;left:857px;width:78px">0,89</div><div class="c r" style="top:811px;left:1034px;width:78px">5</div><div class="c r bl" style="top:811px;left:1460px;width:73px">5</div><div class="cb" style="left:1281px;top:817px"></div><div class="cb" style="left:1552px;top:817px"></div><div class="hl" style="top:144px"></div><div class="hl" style="top:167px"></div><div class="hl" style="top:190px"></div><div class="hl" style="top:213px"></div><div class="hl" style="top:236px"></div><div class="hl" style="top:259px"></div><div class="hl" style="top:282px"></div><div class="hl" style="top:305px"></div><div class="hl" style="top:328px"></div><div class="hl" style="top:351px"></div><div class="hl" style="top:374px"></div><div class="hl" style="top:397px"></div><div class="hl" style="top:420px"></div><div class="hl" style="top:443px"></div><div class="hl" style="top:466px"></div><div class="hl" style="top:489px"></div><div class="hl" style="top:512px"></div><div class="hl" style="top:535px"></div><div class="hl" style="top:558px"></div><div class="hl" style="top:581px"></div><div class="hl" style="top:604px"></div><div class="hl" style="top:627px"></div><div class="hl" style="top:650px"></div><div class="hl" style="top:673px"></div><div class="hl" style="top:696px"></div><div class="hl" style="top:719px"></div><div class="hl" style="top:742px"></div><div class="hl" style="top:765px"></div><div class="hl" style="top:788px"></div><div class="hl" style="top:811px"></div><div class="hl" style="top:834px"></div><div class="vl" style="left:543px"></div><div class="vl" style="left:707px"></div><div class="vl" style="left:819px"></div><div class="vl" style="left:857px"></div><div class="vl" style="left:937px"></div><div class="vl" style="left:954px"></div><div class="vl" style="left:1034px"></div><div class="vl" style="left:1113px"></div><div class="vl" style="left:1189px"></div><div class="vl" style="left:1265px"></div><div class="vl" style="left:1308px"></div><div class="vl" style="left:1384px"></div><div class="vl" style="left:1460px"></div><div class="vl" style="left:1536px"></div><div class="vl" style="left:1579px"></div>

<div class="a" style="left:954px;top:488px;width:82px;height:27px;border:3px solid #ff0000;border-radius:2px"></div>
<div class="a" style="left:972px;top:492px;width:1px;height:19px;background:#cfd8d4"></div>
<div class="a" style="left:973px;top:491px;width:57px;line-height:22px;text-align:right">2</div>
<svg class="a" style="left:958px;top:495px" width="12" height="12" viewBox="0 0 12 12" fill="none"><path d="M1 1 L11 11 M11 1 L1 11" stroke="#333" stroke-width="1.2"/></svg>

<div class="hdr"></div>
<div class="hc" style="left:222px;width:321px;"><svg width="13" height="13" viewBox="0 0 13 13" fill="none" style="margin-right:6px;vertical-align:-2px"><circle cx="6.5" cy="6.5" r="5.4" stroke="#4db3ee" stroke-width="1.25"/><path d="M4.2 7.6 L6.5 5.4 L8.8 7.6" stroke="#2b2b2b" stroke-width="1.4"/></svg>Наименование</div><div class="hc" style="left:543px;width:164px;">Штрихкод</div><div class="hc" style="left:707px;width:112px;">Код</div><div class="hc" style="left:819px;width:38px;">Ед.<br>изм.</div><div class="hc" style="left:857px;width:80px;">Цена учетная</div><div class="hc" style="left:937px;width:17px;top:81px"><svg width="13" height="13" viewBox="0 0 13 13" fill="none" style="vertical-align:-2px"><circle cx="6.5" cy="6.5" r="5.4" stroke="#4db3ee" stroke-width="1.25"/><path d="M4.2 7.6 L6.5 5.4 L8.8 7.6" stroke="#2b2b2b" stroke-width="1.4"/></svg></div><div class="hc" style="left:954px;width:80px;">Кол-во<br>товара в<br>документе</div><div class="hc" style="left:1034px;width:79px;">Текущий<br>остаток</div><div class="hc" style="left:1113px;width:76px;">Резерв<br>закупка<br>(всего)</div><div class="hc" style="left:1189px;width:76px;">Резерв<br>продажа<br>(всего)</div><div class="hc" style="left:1265px;width:43px;">Весь<br>остато<br>к</div><div class="hc" style="left:1308px;width:76px;">Резерв<br>закупка</div><div class="hc" style="left:1384px;width:76px;">Резерв<br>продажа</div><div class="hc" style="left:1460px;width:76px;">Доступное<br>к-во</div><div class="hc" style="left:1536px;width:43px;">Досту<br>пное<br>кол-во</div><div class="hvl" style="left:543px"></div><div class="hvl" style="left:707px"></div><div class="hvl" style="left:819px"></div><div class="hvl" style="left:857px"></div><div class="hvl" style="left:937px"></div><div class="hvl" style="left:954px"></div><div class="hvl" style="left:1034px"></div><div class="hvl" style="left:1113px"></div><div class="hvl" style="left:1189px"></div><div class="hvl" style="left:1265px"></div><div class="hvl" style="left:1308px"></div><div class="hvl" style="left:1384px"></div><div class="hvl" style="left:1460px"></div><div class="hvl" style="left:1536px"></div><div class="tri" style="left:1029px"></div><div class="tri" style="left:1184px"></div><div class="tri" style="left:1260px"></div><div class="tri" style="left:1303px"></div><div class="tri" style="left:1379px"></div><div class="tri" style="left:1455px"></div><div class="tri" style="left:1531px"></div><div class="tri" style="left:1574px"></div>
<div class="sb"></div><div class="sbt"></div>
</div></div>


<div class="a" style="left:221px;top:836px;width:28px;height:22px;border-radius:4px;background:#d6e4e9"></div>
<svg class="a" style="left:226px;top:839px" width="20" height="17" viewBox="0 0 20 17" fill="none"><circle cx="3.5" cy="3.5" r="1.5" stroke="#4db3ee" stroke-width="1"/><circle cx="3.5" cy="8.5" r="1.5" stroke="#4db3ee" stroke-width="1"/><circle cx="3.5" cy="13.5" r="1.5" stroke="#4db3ee" stroke-width="1"/><path d="M7.5 3.5 H17 M7.5 8.5 H17 M7.5 13.5 H17" stroke="#2b2b2b" stroke-width="1"/></svg><svg class="a" style="left:254px;top:838px" width="18" height="18" viewBox="0 0 18 18" fill="none"><rect x="1.5" y="1.5" width="15" height="15" stroke="#2b2b2b" stroke-width="1.2"/><path d="M6.5 2 V16 M11.5 2 V16 M2 6.5 H16 M2 11.5 H16" stroke="#4db3ee" stroke-width="1.1"/></svg><svg class="a" style="left:287px;top:840px" width="17" height="14" viewBox="0 0 17 14" fill="none"><path d="M0.5 1.5 H16" stroke="#2b2b2b" stroke-width="1.1"/><path d="M2.5 5.5 H14" stroke="#4db3ee" stroke-width="1.1"/><path d="M4.5 9.5 H12" stroke="#2b2b2b" stroke-width="1.1"/><path d="M6.5 13.5 H10" stroke="#4db3ee" stroke-width="1.1"/></svg><svg class="a" style="left:318px;top:838px" width="18" height="18" viewBox="0 0 18 18" fill="none"><path d="M9 1.3 L10.6 1.5 L11 3.6 L12.3 4.3 L14.3 3.5 L15.4 4.8 L14.5 6.7 L15 8.1 L17 8.7 L17 10.4 L15 11 L14.5 12.3 L15.4 14.2 L14.3 15.4 L12.3 14.6 L11 15.3 L10.5 17.3 L8.5 17.3 L8 15.3 L6.7 14.6 L4.7 15.4 L3.6 14.2 L4.5 12.3 L4 11 L1.5 10.4 L1.5 8.6 L4 8.1 L4.5 6.7 L3.6 4.8 L4.7 3.5 L6.7 4.3 L8 3.6 L8.4 1.5 Z" stroke="#2b2b2b" stroke-width="1.1" stroke-linejoin="round"/><circle cx="9.25" cy="9.4" r="2.4" stroke="#4db3ee" stroke-width="1.2"/></svg><svg class="a" style="left:350px;top:837px" width="19" height="19" viewBox="0 0 19 19" fill="none"><text x="1" y="6.5" font-size="5.5" font-family="Liberation Sans" font-weight="bold" fill="#4db3ee">1</text><text x="1" y="12.5" font-size="5.5" font-family="Liberation Sans" font-weight="bold" fill="#4db3ee">2</text><text x="1" y="18.3" font-size="5.5" font-family="Liberation Sans" font-weight="bold" fill="#4db3ee">3</text><path d="M7 4.5 H16.5 M7 10.5 H16.5 M7 16.5 H16.5" stroke="#2b2b2b" stroke-width="1.1"/></svg><svg class="a" style="left:378px;top:837px" width="19" height="18" viewBox="0 0 19 18" fill="none"><path d="M1.5 3.5 H16.5 M1.5 7.5 H16.5 M1.5 11.5 H7.5 M1.5 15.5 H7.5" stroke="#2b2b2b" stroke-width="1.1"/><path d="M13.3 10.5 V17 M10 13.8 H16.5" stroke="#4db3ee" stroke-width="1.1"/></svg><svg class="a" style="left:410px;top:837px" width="19" height="19" viewBox="0 0 19 19" fill="none"><path d="M8 5.5 H3.5 Q2 5.5 2 7 V15.5 Q2 17 3.5 17 H12 Q13.5 17 13.5 15.5 V11" stroke="#555" stroke-width="1.6"/><path d="M8.5 10.5 L16.5 2.5 M11.5 2.5 H16.5 V7.5" stroke="#4db3ee" stroke-width="1.2"/></svg><svg class="a" style="left:441px;top:837px" width="20" height="19" viewBox="0 0 20 19" fill="none"><path d="M2.5 14.5 H1.5 V5.2 H11.5" stroke="#2b2b2b" stroke-width="1.2"/><path d="M9.5 2.5 L12 5.2 L9.5 7.9" stroke="#2b2b2b" stroke-width="1.2"/><path d="M16.5 5.2 H18 V14.5 H8" stroke="#4db3ee" stroke-width="1.2"/><path d="M10 11.8 L7.3 14.5 L10 17.2" stroke="#4db3ee" stroke-width="1.2"/></svg>
<svg class="a" style="left:830px;top:840px" width="13" height="13" viewBox="0 0 13 13" fill="none"><rect x="0" y="0" width="13" height="13" rx="2" fill="#4a63f2"/><path d="M2.8 6.8 L5.5 9.5 L10.5 3.5" stroke="#fff" stroke-width="1.9" fill="none"/></svg>
<div class="a" style="left:845px;top:841px;line-height:16px;color:#222">Активные</div>
<div class="a" style="left:905px;top:835px;width:122px;height:24px;background:#fff;border:1px solid #cfcfcf;border-radius:3px;line-height:24px;padding-left:7px;color:#222;letter-spacing:-0.15px">С остатком (F10)</div>
<svg class="a" style="left:1011px;top:843px" width="12" height="8" viewBox="0 0 12 8" fill="none"><path d="M1.8 1.5 L5.8 5.5 L9.8 1.5" stroke="#1a1a1a" stroke-width="1.8"/></svg>
<div class="btn" style="left:1033px;top:836px;width:101px;padding-left:20px">Добавить</div><svg class="a" style="left:1048px;top:841px" width="12" height="12" viewBox="0 0 12 12" fill="none"><path d="M6 0.5 V11.5 M0.5 6 H11.5" stroke="#333" stroke-width="1.4"/></svg>
<div class="btn" style="left:1138px;top:836px;width:129px;padding-left:20px">Редактировать</div><svg class="a" style="left:1153px;top:838px" width="13" height="16" viewBox="0 0 13 16" fill="none"><path d="M1.5 12 L1.8 9.3 L9 1.8 L11.5 4.3 L4.3 11.6 Z" stroke="#2b2b2b" stroke-width="1.1" stroke-linejoin="round"/><path d="M0.5 14.5 H11.5" stroke="#4db3ee" stroke-width="1.2"/></svg>
<div class="btn" style="left:1271px;top:836px;width:118px">Копировать (F6)</div>
<div class="btn" style="left:1393px;top:836px;width:196px">Создать уцененный товар (F6)</div>
<div class="line" style="left:6px;top:865px;width:1585px"></div>
<div class="btn" style="left:1130px;top:870px;width:42px"></div><svg class="a" style="left:1144px;top:874px" width="14" height="14" viewBox="0 0 14 14" fill="none"><path d="M1.6 5.4 A5.6 5.6 0 0 1 10.8 2.6" stroke="#2b2b2b" stroke-width="1.2"/><path d="M13.2 1 V5.8 H8.4 Z" fill="#2b2b2b"/><path d="M12.2 8.8 A5.6 5.6 0 0 1 3 11.4" stroke="#4db3ee" stroke-width="1.2"/><path d="M1 12.8 V8 H5.8 Z" fill="#4db3ee"/></svg>
<div class="btn" style="left:1176px;top:870px;width:106px;padding-left:18px">Сохранить</div><svg class="a" style="left:1190px;top:874px" width="14" height="14" viewBox="0 0 14 14" fill="none"><path d="M3 1.4 H9.5 L12.6 4.5 V10.8 Q12.6 12.6 10.8 12.6 H3 Q1.4 12.6 1.4 10.8 V3 Q1.4 1.4 3 1.4 Z" stroke="#333" stroke-width="1.4" stroke-linejoin="round"/><path d="M3.5 10 V7.5 H10.5 V10" stroke="#4db3ee" stroke-width="1.3"/></svg>
<div class="btn" style="left:1286px;top:870px;width:101px;padding-left:18px">Отменить</div><svg class="a" style="left:1300px;top:874px" width="14" height="14" viewBox="0 0 14 14" fill="none"><path d="M1.3 3.5 H12.8" stroke="#4db3ee" stroke-width="1.2"/><path d="M5.2 3.5 V1.4 H8.8 V3.5" stroke="#4db3ee" stroke-width="1.1"/><path d="M3.2 5 V11 Q3.2 12.5 4.7 12.5 H9.3 Q10.8 12.5 10.8 11 V5" stroke="#222" stroke-width="1.3"/></svg>
<div class="btn" style="left:1391px;top:870px;width:101px;padding-left:16px">Провести</div><svg class="a" style="left:1404px;top:874px" width="16" height="14" viewBox="0 0 16 14" fill="none"><path d="M2 7.8 L5.8 11.8 L13.5 2.2" stroke="#222" stroke-width="1.3"/></svg>
<div class="btn" style="left:1496px;top:870px;width:93px;padding-left:16px">Закрыть</div><svg class="a" style="left:1511px;top:874px" width="12" height="13" viewBox="0 0 12 13" fill="none"><path d="M1.5 2 L10.5 11.5 M10.5 2 L1.5 11.5" stroke="#222" stroke-width="1.3"/></svg>

</body></html>
